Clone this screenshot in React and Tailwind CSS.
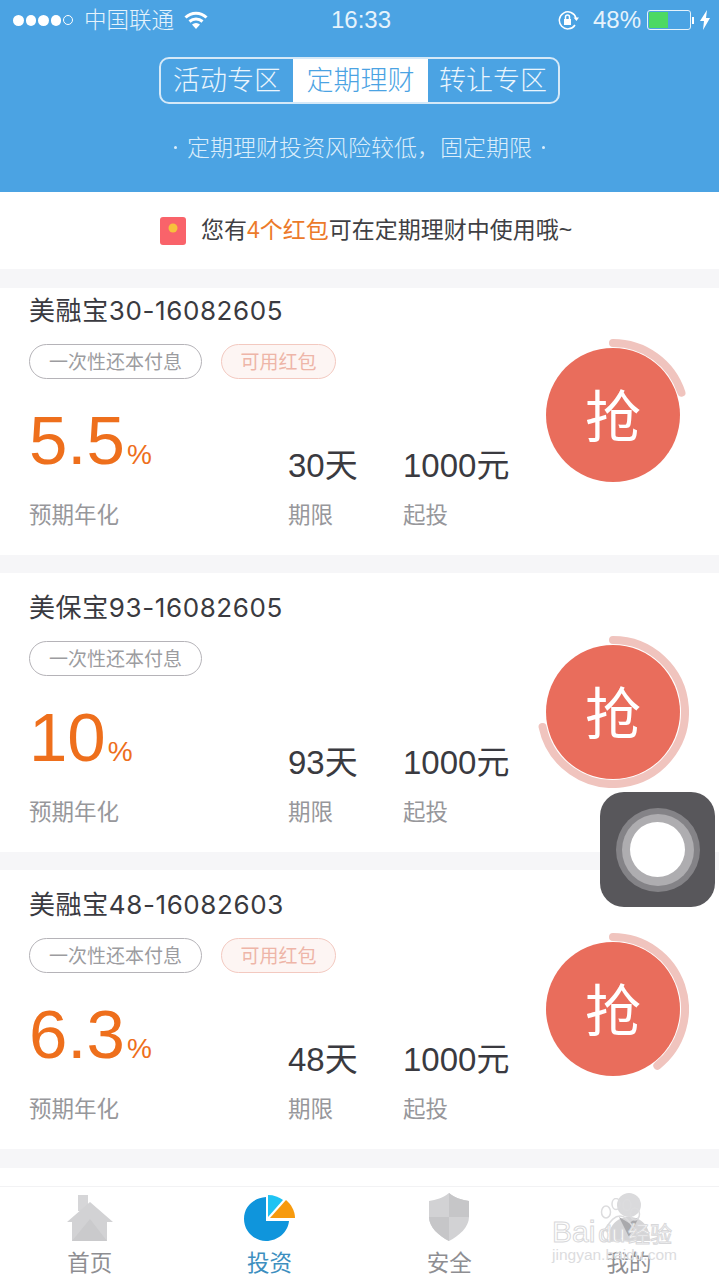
import { useState } from "react";

const cards = [
  { name: "美融宝", code: "30-16082605", tag: true, rate: "5.5", days: "30", progress: 72, first: true },
  { name: "美保宝", code: "93-16082605", tag: false, rate: "10", days: "93", progress: 258 },
  { name: "美融宝", code: "48-16082603", tag: true, rate: "6.3", days: "48", progress: 142 },
];

function Ring({ deg }) {
  // arc starts at 12 o'clock and runs clockwise
  const r = 72;
  const a = ((deg - 90) * Math.PI) / 180;
  const x = 76 + r * Math.cos(a);
  const y = 76 + r * Math.sin(a);
  const large = deg > 180 ? 1 : 0;
  return (
    <svg className="absolute -left-[9px] -top-[9px]" width="152" height="152" viewBox="0 0 152 152">
      <path
        d={`M76 4 A${r} ${r} 0 ${large} 1 ${x} ${y}`}
        fill="none"
        stroke="#f0c4be"
        strokeWidth="8"
        strokeLinecap="round"
      />
    </svg>
  );
}

function Card({ card }) {
  return (
    <div className={`bg-white relative pl-[29px] ${card.first ? "h-[267px] pt-[7px]" : "h-[279px] pt-[19px]"}`}>
      <div className="text-[26px] leading-[32px] text-[#3a3a40] font-normal font-['Inter','Noto_Sans_CJK_SC',sans-serif] tracking-[0.6px]">
        {card.name}
        {card.code}
      </div>
      <div className="flex gap-[19px] mt-[17px]">
        <div className="w-[173px] h-[35px] rounded-full border border-[#b5b3b8] flex items-center justify-center text-[19px] text-[#9c9ca0] font-normal">
          一次性还本付息
        </div>
        {card.tag && (
          <div className="w-[115px] h-[35px] rounded-full border border-[#f3c9c0] bg-[#fdf5f3] flex items-center justify-center text-[19px] text-[#eeb5a8] font-normal">
            可用红包
          </div>
        )}
      </div>
      <div className="flex mt-[14px] h-[130px]">
        <div className="w-[259px] pt-[10px]">
          <div className="flex items-baseline text-[#ee6f1c] font-normal leading-[76px] font-['Liberation_Sans',sans-serif]">
            <span className="text-[69px]">{card.rate}</span>
            <span className="text-[28px] ml-[2px]">%</span>
          </div>
          <div className="text-[22.5px] leading-[30px] text-[#97979b] mt-[5px] font-normal">预期年化</div>
        </div>
        <div className="w-[115px] pt-[51px]">
          <div className="text-[33px] leading-[44px] text-[#3a3a40] font-normal font-['Liberation_Sans','Noto_Sans_CJK_SC',sans-serif]">
            {card.days}天
          </div>
          <div className="text-[22.5px] leading-[30px] text-[#97979b] mt-[10px] font-normal">期限</div>
        </div>
        <div className="pt-[51px]">
          <div className="text-[33px] leading-[44px] text-[#3a3a40] font-normal font-['Liberation_Sans','Noto_Sans_CJK_SC',sans-serif]">
            1000元
          </div>
          <div className="text-[22.5px] leading-[30px] text-[#97979b] mt-[10px] font-normal">起投</div>
        </div>
      </div>
      <div className={`absolute left-[546px] w-[134px] h-[134px] rounded-full bg-[#e96d5c] flex items-center justify-center text-white text-[56px] font-normal ${card.first ? "top-[60px]" : "top-[72px]"}`}>
        <span className="pb-[5px]">抢</span>
        <Ring deg={card.progress} />
      </div>
    </div>
  );
}

function HomeIcon() {
  return (
    <svg width="46" height="46" viewBox="0 0 46 46">
      <rect x="11" y="0" width="10" height="16" fill="#d6d6d8" />
      <path d="M0 27 L23 7 L46 27 L40 27 L40 46 L5 46 L5 27 Z" fill="#d2d2d4" />
      <path d="M5 46 L23 24 L40 46 Z" fill="#cacacc" />
    </svg>
  );
}

function PieIcon() {
  return (
    <svg width="51" height="46" viewBox="0 0 51 46">
      <path d="M22 2 C10 3 0 11 0 24 C0 36 10 46 22 46 C34 46 44 37 45 26 L22 26 Z" fill="#0f95dc" />
      <path d="M24 0 L24 22 L39 5 C35 2 30 0 24 0 Z" fill="#1fc3f3" />
      <path d="M26 23 L42 5 C47 9 51 16 51 23 Z" fill="#f79a0e" />
    </svg>
  );
}

function ShieldIcon() {
  return (
    <svg width="40" height="48" viewBox="0 0 40 48">
      <path d="M20 0 C26 5 33 7 40 8 L40 24 C40 34 30 43 20 48 C10 43 0 34 0 24 L0 8 C7 7 14 5 20 0 Z" fill="#d2d2d4" />
      <path d="M20 0 C26 5 33 7 40 8 L40 24 L20 24 Z" fill="#c6c6c8" />
      <path d="M20 24 L0 24 C0 34 10 43 20 48 Z" fill="#c6c6c8" />
    </svg>
  );
}

function UserIcon() {
  return (
    <svg width="46" height="48" viewBox="0 0 46 48">
      <circle cx="23" cy="12" r="12" fill="#dadadc" />
      <path d="M2 48 C2 34 10 24 23 24 C36 24 44 34 44 48 Z" fill="#d4d4d6" />
      <path d="M23 30 L13 24 L23 44 L33 24 Z" fill="#a9a9ac" />
    </svg>
  );
}

function PawMark() {
  return (
    <svg className="absolute left-[46px] -top-[18px]" width="44" height="46" viewBox="0 0 44 46" fill="none" stroke="#dcdcde" strokeWidth="1.5">
      <ellipse cx="8" cy="14" rx="4.5" ry="6" />
      <ellipse cx="18" cy="6" rx="4" ry="5.5" />
      <ellipse cx="29" cy="7" rx="4" ry="5.5" />
      <ellipse cx="37" cy="16" rx="4.5" ry="6" />
      <path d="M22 18 C15 18 11 26 7 31 C2 38 8 45 15 43 C19 42 25 42 29 43 C37 45 42 37 37 31 C32 26 29 18 22 18 Z" />
    </svg>
  );
}

const tabs = [
  { label: "首页", icon: <HomeIcon /> },
  { label: "投资", icon: <PieIcon />, active: true },
  { label: "安全", icon: <ShieldIcon /> },
  { label: "我的", icon: <UserIcon /> },
];

const segments = [
  { label: "活动专区", width: "w-[132px]" },
  { label: "定期理财", width: "w-[135px]" },
  { label: "转让专区", width: "flex-1" },
];

export default function App() {
  const [active] = useState(1);

  return (
    <div className="w-[719px] h-[1280px] overflow-hidden relative bg-[#f6f6f8] font-['Noto_Sans_CJK_SC',sans-serif] font-light">
      {/* Header */}
      <div className="bg-[#4ba3e3] h-[192px] text-white">
        {/* Status bar */}
        <div className="h-[40px] px-[13px] flex items-center relative text-[24px] text-[#e6f3fc]">
          <div className="flex items-center gap-[2px] w-[60px]">
            {[0, 1, 2, 3].map((i) => (
              <span key={i} className="w-[11px] h-[11px] rounded-full bg-white" />
            ))}
            <span className="w-[10px] h-[10px] rounded-full border border-white" />
          </div>
          <span className="ml-[11px] text-[22.5px] pb-[3px]">中国联通</span>
          <svg className="ml-[10px]" width="24" height="18" viewBox="0 0 24 18" fill="none" stroke="#fff" strokeWidth="3">
            <path d="M1.5 6.5 A15 15 0 0 1 22.5 6.5" />
            <path d="M5.5 10.5 A10 10 0 0 1 18.5 10.5" />
            <path d="M12 18 L8 13.5 A6 6 0 0 1 16 13.5 Z" fill="#fff" stroke="none" />
          </svg>
          <span className="absolute left-[331px] font-['Liberation_Sans',sans-serif] font-normal">16:33</span>
          <div className="absolute left-[558px] top-0 h-[40px] flex items-center">
            <svg width="22" height="20" viewBox="0 0 22 20" fill="none" stroke="#fff" strokeWidth="1.5">
              <path d="M17 15 A8.5 8.5 0 1 1 18 8" />
              <path d="M15.5 7.5 L21 7.5 L18.5 11 Z" fill="#fff" stroke="none" />
              <rect x="6" y="9" width="7" height="6" fill="#fff" stroke="none" />
              <path d="M7.5 9 V7 A2 2 0 0 1 11.5 7 V9" />
            </svg>
            <span className="ml-[13px] font-['Liberation_Sans',sans-serif] font-normal">48%</span>
            <div className="ml-[6px] w-[44px] h-[20px] rounded-[3px] border border-[#e6f3fc] p-[1px]">
              <div className="w-[19px] h-full bg-[#4cd964]" />
            </div>
            <span className="w-[2px] h-[7px] bg-white ml-[1px]" />
            <svg className="ml-[6px]" width="10" height="20" viewBox="0 0 10 20">
              <path d="M7 0 L0 11 L4 11 L3 20 L10 8 L6 8 Z" fill="#fff" />
            </svg>
          </div>
        </div>

        {/* Segmented control */}
        <div className="flex justify-center mt-[17px]">
          <div className="w-[401px] h-[47px] rounded-[10px] border-2 border-[#d5e9f8] flex overflow-hidden">
            {segments.map((s, i) => (
              <div
                key={s.label}
                className={`${s.width} flex items-center justify-center text-[27px] pb-[3px] ${
                  i === active ? "bg-white text-[#4ba3e3]" : "text-[#eaf5fd]"
                }`}
              >
                {s.label}
              </div>
            ))}
          </div>
        </div>

        <div className="flex justify-center items-center gap-[10px] text-[23px] leading-[30px] mt-[27px] text-[#dceefb]">
          <span className="w-[3px] h-[3px] rounded-full bg-[#dceefb] mt-[3px]" />
          <span>定期理财投资风险较低，固定期限</span>
          <span className="w-[3px] h-[3px] rounded-full bg-[#dceefb] mt-[3px]" />
        </div>
      </div>

      {/* Red packet banner */}
      <div className="bg-white h-[77px] flex items-center pl-[160px]">
        <svg width="26" height="28" viewBox="0 0 26 28">
          <rect width="26" height="28" rx="3" fill="#f9636a" />
          <circle cx="13" cy="11" r="4.5" fill="#f7c13c" />
        </svg>
        <span className="ml-[15px] text-[23px] text-[#3f3f44] font-normal font-['Liberation_Sans','Noto_Sans_CJK_SC',sans-serif]">
          您有<span className="text-[#ec7a2a]">4个红包</span>可在定期理财中使用哦~
        </span>
      </div>

      {/* Product list */}
      <div className="pt-[19px] flex flex-col gap-[18px]">
        {cards.map((c, i) => (
          <Card key={i} card={c} />
        ))}
      </div>

      {/* Bottom tabs */}
      <div className="absolute left-0 right-0 top-[1168px] bottom-0 bg-white">
        <div className="h-[18px] border-b border-[#f2f2f4] box-content" />
        <div className="flex">
          {tabs.map((t) => (
            <div key={t.label} className="w-[180px] h-[93px] flex flex-col items-center pt-[8px]">
              <div className="h-[46px] flex items-end">{t.icon}</div>
              <span className={`text-[22.5px] leading-[30px] mt-[5px] font-normal ${t.active ? "text-[#3d8fc0]" : "text-[#8e8e92]"}`}>{t.label}</span>
            </div>
          ))}
        </div>
      </div>

      {/* Watermark */}
      <div className="absolute left-[552px] top-[1216px] text-white [-webkit-text-stroke:1px_#d8d8da] font-['Liberation_Sans','Noto_Sans_CJK_SC',sans-serif] font-normal">
        <PawMark />
        <div className="text-[30px] leading-[32px] whitespace-nowrap relative">
          Bai<span className="ml-[3px] text-[24px]">du</span>
          <span className="ml-[3px] text-[22px]">经验</span>
        </div>
      </div>
      <div className="absolute left-[552px] top-[1246px] text-[15.5px] leading-[18px] text-[#dcdcde] font-['Liberation_Sans',sans-serif] whitespace-nowrap">
        jingyan.baidu.com
      </div>

      {/* Assistive touch */}
      <div className="absolute left-[600px] top-[792px] w-[115px] h-[115px] rounded-[24px] bg-[#58575b] flex items-center justify-center">
        <div className="w-[84px] h-[84px] rounded-full bg-[#848387] flex items-center justify-center">
          <div className="w-[72px] h-[72px] rounded-full bg-[#aeadb0] flex items-center justify-center">
            <div className="w-[55px] h-[55px] rounded-full bg-white" />
          </div>
        </div>
      </div>
    </div>
  );
}
